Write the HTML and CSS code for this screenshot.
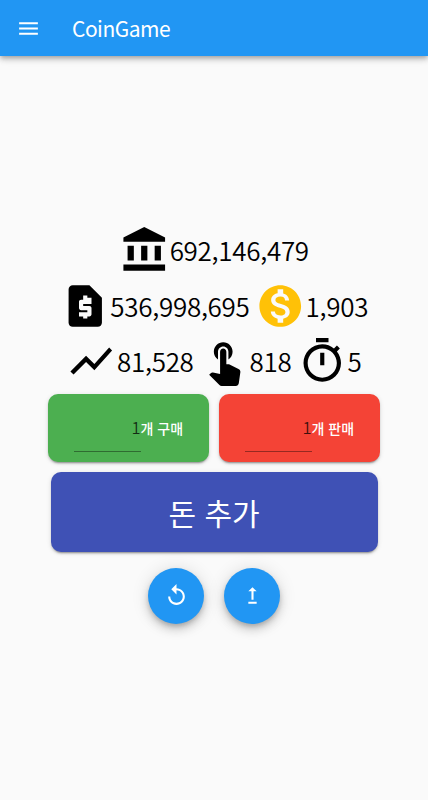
FILE: index.html
```html
<!DOCTYPE html>
<html lang="ko">
  <head>
    <meta charset="UTF-8" />
    <meta name="viewport" content="width=device-width, initial-scale=1.0" />
    <title>CoinGame</title>
    <link rel="stylesheet" href="styles.css">
  </head>
  <body>
    <header class="app-bar">
      <svg class="menu-icon" viewBox="0 0 24 24"><path d="M3 18h18v-2H3v2zm0-5h18v-2H3v2zm0-7v2h18V6H3z" /></svg>
      <h1>CoinGame</h1>
    </header>

    <main class="game">
      <div class="stat-row">
        <div class="stat">
          <svg viewBox="0 0 24 24"><path d="M4 10h3v7H4zM10.5 10h3v7h-3zM2 19h20v3H2zM17 10h3v7h-3zM12 1L2 6v2h20V6z" /></svg>
          <span>692,146,479</span>
        </div>
      </div>
      <div class="stat-row">
        <div class="stat">
          <svg viewBox="0 0 24 24"><path d="M14 2H6c-1.1 0-1.99.9-1.99 2L4 20c0 1.1.89 2 1.99 2H18c1.1 0 2-.9 2-2V8l-6-6zm1 9h-4v1h3c.55 0 1 .45 1 1v3c0 .55-.45 1-1 1h-1v1h-2v-1H9v-2h4v-1h-3c-.55 0-1-.45-1-1v-3c0-.55.45-1 1-1h1V7h2v1h2v3z" /></svg>
          <span>536,998,695</span>
        </div>
        <div class="stat">
          <svg class="coin" viewBox="0 0 24 24"><path d="M12 2C6.48 2 2 6.48 2 12s4.48 10 10 10 10-4.48 10-10S17.52 2 12 2zm1.41 16.09V20h-2.67v-1.93c-1.71-.36-3.16-1.46-3.27-3.4h1.96c.1 1.05.82 1.87 2.65 1.87 1.96 0 2.4-.98 2.4-1.59 0-.83-.44-1.61-2.67-2.14-2.48-.6-4.18-1.62-4.18-3.67 0-1.72 1.39-2.84 3.11-3.21V4h2.67v1.95c1.86.45 2.79 1.86 2.85 3.39H14.3c-.05-1.11-.64-1.87-2.22-1.87-1.5 0-2.4.68-2.4 1.64 0 .84.65 1.39 2.67 1.91s4.18 1.39 4.18 3.91c-.01 1.83-1.38 2.83-3.12 3.16z" /></svg>
          <span>1,903</span>
        </div>
      </div>
      <div class="stat-row">
        <div class="stat">
          <svg viewBox="0 0 24 24"><path d="M3.5 18.49l6-6.01 4 4L22 6.92l-1.41-1.41-7.09 7.97-4-4L2 16.99z" /></svg>
          <span>81,528</span>
        </div>
        <div class="stat">
          <svg viewBox="0 0 24 24"><path d="M9 11.24V7.5C9 6.12 10.12 5 11.5 5S14 6.12 14 7.5v3.74c1.21-.81 2-2.18 2-3.74C16 5.01 13.99 3 11.5 3S7 5.01 7 7.5c0 1.56.79 2.93 2 3.74zm9.84 4.63l-4.54-2.26c-.17-.07-.35-.11-.54-.11H13v-6c0-.83-.67-1.5-1.5-1.5S10 6.67 10 7.5v10.74l-3.43-.72c-.08-.01-.15-.03-.24-.03-.31 0-.59.13-.79.33l-.79.8 4.94 4.94c.27.27.65.44 1.06.44h6.79c.75 0 1.33-.55 1.44-1.28l.75-5.27c.01-.07.02-.14.02-.2 0-.62-.38-1.16-.91-1.38z" /></svg>
          <span>818</span>
        </div>
        <div class="stat">
          <svg viewBox="0 0 24 24"><path d="M15 1H9v2h6V1zm-4 13h2V8h-2v6zm8.03-6.61l1.42-1.42c-.43-.51-.9-.99-1.41-1.41l-1.42 1.42C16.07 4.74 14.12 4 12 4c-4.97 0-9 4.03-9 9s4.02 9 9 9 9-4.03 9-9c0-2.12-.74-4.07-1.97-5.61zM12 20c-3.87 0-7-3.13-7-7s3.13-7 7-7 7 3.13 7 7-3.13 7-7 7z" /></svg>
          <span>5</span>
        </div>
      </div>

      <div class="trade">
        <div class="trade-button buy">
          <span class="amount">1</span>
          <span class="label">개 구매</span>
        </div>
        <div class="trade-button sell">
          <span class="amount">1</span>
          <span class="label">개 판매</span>
        </div>
      </div>

      <button class="add-money">돈 추가</button>

      <div class="actions">
        <button class="fab" aria-label="Reset">
          <svg viewBox="0 0 24 24"><path d="M12 5V1L7 6l5 5V7c3.31 0 6 2.69 6 6s-2.69 6-6 6-6-2.69-6-6H4c0 4.42 3.58 8 8 8s8-3.58 8-8-3.58-8-8-8z" /></svg>
        </button>
        <button class="fab" aria-label="Upgrade">
          <svg viewBox="0 0 24 24"><path d="M16 18v2H8v-2h8zM11 7.99V16h2V7.99h3L12 4 8 7.99h3z" /></svg>
        </button>
      </div>
    </main>
  </body>
</html>
```

FILE: styles.css
```css
* {
  box-sizing: border-box;
}
body {
  margin: 0;
  height: 100vh;
  display: flex;
  flex-direction: column;
  font-family: "Noto Sans CJK KR", "Noto Sans", sans-serif;
  background-color: #fafafa;
  color: #000;
}
svg {
  display: block;
  flex: none;
  fill: currentColor;
}
button {
  border: none;
  padding: 0;
  font-family: inherit;
  color: white;
  cursor: pointer;
}
.app-bar {
  height: 56px;
  flex: none;
  display: flex;
  align-items: center;
  padding: 0 16px;
  background-color: #2196f3;
  color: white;
  box-shadow: 0 2px 4px -1px rgba(0, 0, 0, 0.2), 0 4px 5px rgba(0, 0, 0, 0.14),
    0 1px 10px rgba(0, 0, 0, 0.12);
}
.menu-icon {
  width: 25px;
  height: 25px;
}
.app-bar h1 {
  margin: 1px 0 0 31px;
  font-size: 21px;
  font-weight: 400;
  line-height: 1;
  letter-spacing: -0.5px;
}
.game {
  display: flex;
  flex-direction: column;
  align-items: center;
  padding-top: 169px;
}
.stat-row {
  display: flex;
  gap: 5.5px;
  height: 55.5px;
}
.stat {
  display: flex;
  align-items: center;
  height: 50px;
  font-size: 26px;
  font-weight: 350;
  line-height: 50px;
  letter-spacing: -0.3px;
}
.stat svg {
  width: 50.5px;
  height: 50px;
}
.coin {
  color: #ffc107;
}
.trade {
  display: flex;
  gap: 10px;
  margin-top: 2px;
}
.trade-button {
  width: 161px;
  height: 68px;
  display: flex;
  align-items: center;
  padding-left: 26px;
  border-radius: 10px;
  box-shadow: 0 3px 1px -2px rgba(0, 0, 0, 0.2), 0 2px 2px rgba(0, 0, 0, 0.14),
    0 1px 5px rgba(0, 0, 0, 0.12);
}
.buy {
  background-color: #4caf50;
}
.sell {
  background-color: #f44336;
}
.amount {
  width: 66.5px;
  height: 49px;
  border-bottom: 1px solid rgba(0, 0, 0, 0.38);
  text-align: right;
  font-size: 16.5px;
  font-weight: 350;
  line-height: 49px;
  color: rgba(0, 0, 0, 0.75);
}
.label {
  font-size: 14px;
  font-weight: 500;
  color: white;
}
.add-money {
  width: 327px;
  height: 80px;
  margin-top: 10px;
  border-radius: 10px;
  background-color: #3f51b5;
  font-size: 30px;
  box-shadow: 0 3px 1px -2px rgba(0, 0, 0, 0.2), 0 2px 2px rgba(0, 0, 0, 0.14),
    0 1px 5px rgba(0, 0, 0, 0.12);
}
.actions {
  display: flex;
  gap: 20px;
  margin-top: 16px;
}
.fab {
  width: 56px;
  height: 56px;
  display: flex;
  align-items: center;
  justify-content: center;
  border-radius: 50%;
  background-color: #2196f3;
  box-shadow: 0 3px 5px -1px rgba(0, 0, 0, 0.2), 0 6px 10px rgba(0, 0, 0, 0.14),
    0 1px 18px rgba(0, 0, 0, 0.12);
}
.fab svg {
  width: 25px;
  height: 25px;
}
```
